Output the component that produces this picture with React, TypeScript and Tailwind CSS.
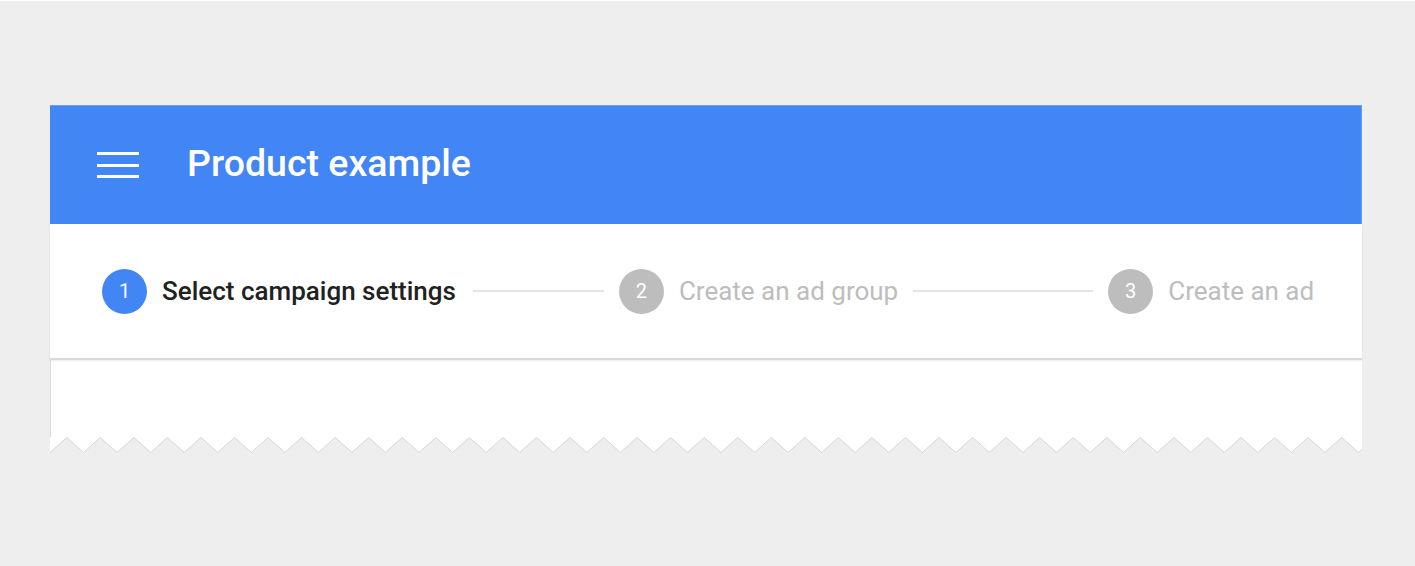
import React from "react";

function Zigzag() {
  const w = 1312;
  const h = 16;
  const period = 33.55;
  const top = 0.5;
  const bottom = 15.5;
  const pts: string[] = [];
  pts.push(`0,${bottom}`);
  let x = period / 2;
  let up = true;
  while (x < w + period) {
    pts.push(`${x.toFixed(2)},${up ? top : bottom}`);
    up = !up;
    x += period / 2;
  }
  const line = pts.join(" ");
  const fill = `0,0 ${line} ${w + period},0`;
  return (
    <svg width={w} height={h} viewBox={`0 0 ${w} ${h}`} className="block">
      <polygon points={fill} fill="#ffffff" />
      <polyline points={line} fill="none" stroke="#d6d6d6" strokeWidth="1" />
    </svg>
  );
}

function Circle({ n, active }: { n: number; active?: boolean }) {
  return (
    <div
      className={`w-[45px] h-[45px] rounded-full flex items-center justify-center text-white text-[20px] shrink-0 ${
        active ? "bg-[#4285f4]" : "bg-[#bdbdbd]"
      }`}
    >
      {n}
    </div>
  );
}

export default function App() {
  return (
    <div
      className="w-[1415px] h-[566px] bg-[#eeeeee] overflow-hidden"
      style={{ fontFamily: "Roboto, 'Noto Sans', sans-serif" }}
    >
      <div className="h-px bg-white" />
      <div className="pt-[104px] pl-[50px]">
        <div className="w-[1312px]">
          {/* Header */}
          <div className="h-[119px] bg-[#4285f4] border-t border-r border-[#6b9ef6] flex items-center">
            <div className="ml-[47px] w-[42px] flex flex-col gap-[8.5px]">
              <div className="h-[3px] bg-white" />
              <div className="h-[3px] bg-white" />
              <div className="h-[3px] bg-white" />
            </div>
            <div className="ml-[48px] text-white text-[37.5px] font-medium leading-none pb-[2px]">
              Product example
            </div>
          </div>
          {/* Stepper */}
          <div className="h-[136px] bg-white flex items-center pl-[52px] border-b-2 border-[#d9d9d9] shadow-[0_1px_2px_rgba(0,0,0,0.08)] relative z-10">
            <Circle n={1} active />
            <div className="ml-[15px] text-[26px] font-medium text-[#212121] whitespace-nowrap">
              Select campaign settings
            </div>
            <div className="ml-[17px] w-[131px] h-[2px] bg-[#e4e4e4]" />
            <div className="ml-[15px]">
              <Circle n={2} />
            </div>
            <div className="ml-[15px] text-[26px] text-[#bdbdbd] whitespace-nowrap">
              Create an ad group
            </div>
            <div className="ml-[15px] w-[180px] h-[2px] bg-[#e4e4e4]" />
            <div className="ml-[15px]">
              <Circle n={3} />
            </div>
            <div className="ml-[15px] text-[26px] text-[#bdbdbd] whitespace-nowrap">
              Create an ad
            </div>
          </div>
          {/* Body */}
          <div className="h-[77px] bg-white border-l border-[#dcdcdc]" />
          <Zigzag />
        </div>
      </div>
    </div>
  );
}
